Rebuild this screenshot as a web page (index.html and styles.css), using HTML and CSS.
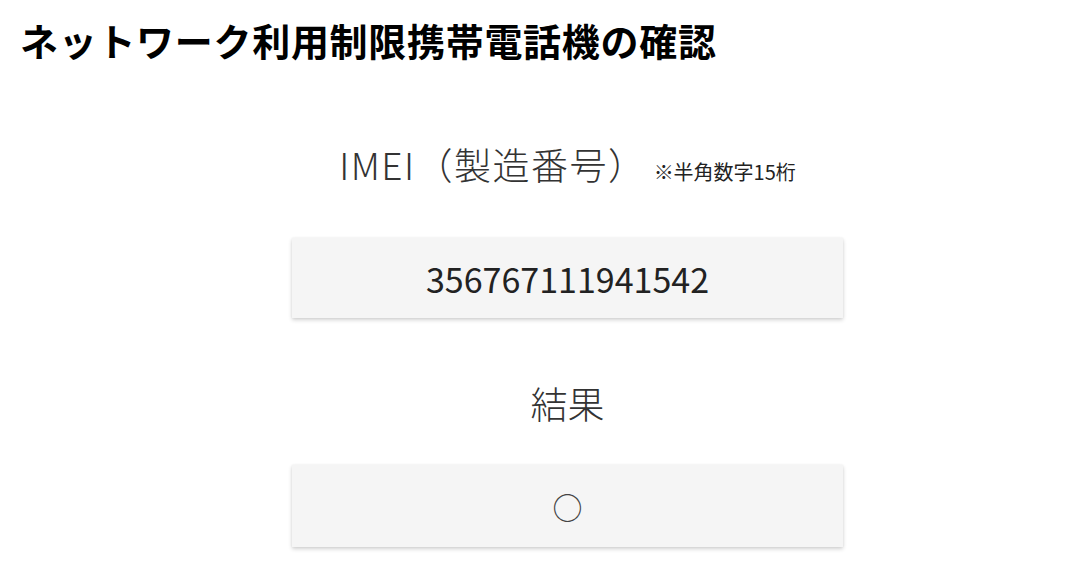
FILE: index.html
```html
<!DOCTYPE html>
<html lang="ja">
<head>
<meta charset="utf-8">
<link rel="stylesheet" href="styles.css">
</head>
<body>
<h1 class="title">ネットワーク利用制限携帯電話機の確認</h1>
<main class="panel">
  <div class="label label-imei"><span class="label-main">IMEI（製造番号）</span><span class="note">※半角数字15桁</span></div>
  <div class="box box-imei">356767111941542</div>
  <div class="label label-result">結果</div>
  <div class="box box-result"><span class="mark">○</span></div>
</main>
</body>
</html>
```

FILE: styles.css
```css
html, body {
  margin: 0;
  padding: 0;
  background: #ffffff;
}
body {
  font-family: "Noto Sans CJK JP", "Noto Sans", sans-serif;
  width: 1080px;
  height: 576px;
  overflow: hidden;
}
.title {
  margin: 0;
  padding: 17px 0 0 20px;
  font-size: 38px;
  line-height: 46px;
  font-weight: 700;
  color: #000;
  letter-spacing: 0.7px;
}
.panel {
  width: 551px;
  margin-left: 292px;
  display: flex;
  flex-direction: column;
  align-items: stretch;
}
.label {
  text-align: center;
  font-size: 37px;
  line-height: 46px;
  font-weight: 300;
  color: #333;
}
.label-imei {
  margin-top: 78px;
  white-space: nowrap;
}
.label-main {
  letter-spacing: 1.5px;
}
.note {
  font-size: 20px;
  color: #222;
  font-weight: 400;
  margin-left: 7px;
}
.label-result {
  margin-top: 62px;
}
.box {
  background: #f5f5f5;
  box-shadow: 0 2px 4px rgba(0, 0, 0, 0.18), 0 0 2px rgba(0, 0, 0, 0.06);
  display: flex;
  align-items: center;
  justify-content: center;
  color: #222;
}
.box-imei {
  margin-top: 43px;
  height: 80px;
  font-size: 34px;
  font-weight: 400;
}
.box-result {
  margin-top: 39px;
  height: 82px;
}
.mark {
  font-size: 30px;
  line-height: 1;
  color: #444;
}
```
